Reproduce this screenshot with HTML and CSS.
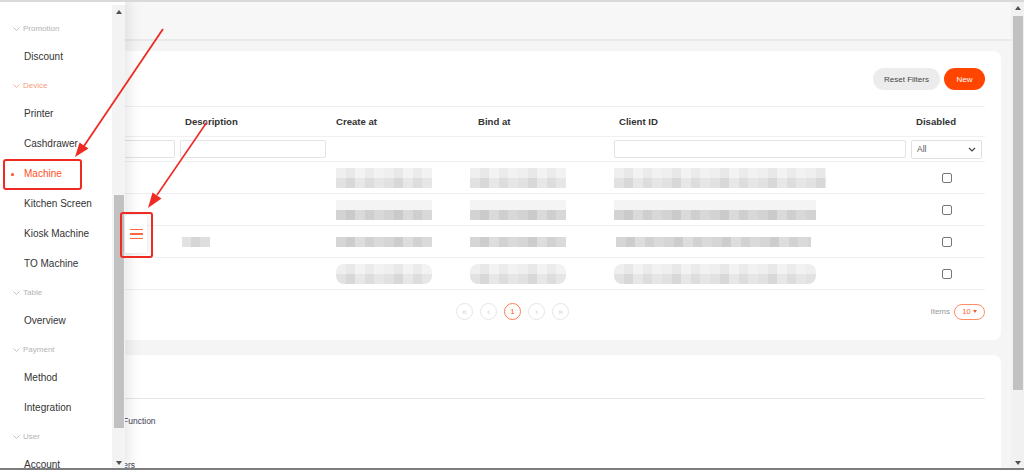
FILE: index.html
```html
<!DOCTYPE html>
<html lang="en">
<head>
  <meta charset="UTF-8">
  <meta name="viewport" content="width=device-width, initial-scale=1.0">
  <title>Machine</title>
  <link rel="stylesheet" href="styles.css">
</head>
<body>

  <!-- Main page -->
  <div class="main">
    <div class="top-band"></div>

    <div class="content">
      <!-- Machine list card -->
      <div class="card list-card">
        <div class="toolbar">
          <button class="btn btn-light">Reset Filters</button>
          <button class="btn btn-primary">New</button>
        </div>

        <div class="grid">
          <div class="row head">
            <div class="cell"></div>
            <div class="cell">Description</div>
            <div class="cell">Create at</div>
            <div class="cell">Bind at</div>
            <div class="cell">Client ID</div>
            <div class="cell">Disabled</div>
          </div>
          <div class="row filters">
            <div class="fcell"><div class="input"></div></div>
            <div class="fcell"><div class="input"></div></div>
            <div class="fcell"></div>
            <div class="fcell"></div>
            <div class="fcell"><div class="input"></div></div>
            <div class="fcell">
              <div class="select">All
                <svg width="8" height="5" viewBox="0 0 8 5"><path d="M1 1 L4 4 L7 1" fill="none" stroke="#444" stroke-width="1.2"/></svg>
              </div>
            </div>
          </div>

          <div class="row data">
            <div class="cell"></div>
            <div class="cell"></div>
            <div class="cell"><div class="blur date"></div></div>
            <div class="cell"><div class="blur date shift"></div></div>
            <div class="cell"><div class="blur cid"></div></div>
            <div class="cell center"><span class="check"></span></div>
          </div>
          <div class="row data">
            <div class="cell"></div>
            <div class="cell"></div>
            <div class="cell"><div class="blur date two"></div></div>
            <div class="cell"><div class="blur date shift two"></div></div>
            <div class="cell"><div class="blur cid two short"></div></div>
            <div class="cell center"><span class="check"></span></div>
          </div>
          <div class="row data">
            <div class="cell"></div>
            <div class="cell"><div class="blur tiny"></div></div>
            <div class="cell"><div class="blur date thin"></div></div>
            <div class="cell"><div class="blur date shift thin"></div></div>
            <div class="cell"><div class="blur cid thin shorter"></div></div>
            <div class="cell center"><span class="check"></span></div>
          </div>
          <div class="row data">
            <div class="cell"></div>
            <div class="cell"></div>
            <div class="cell"><div class="blur date round"></div></div>
            <div class="cell"><div class="blur date shift round"></div></div>
            <div class="cell"><div class="blur cid round short"></div></div>
            <div class="cell center"><span class="check"></span></div>
          </div>
        </div>

        <div class="pager-row">
          <div class="pager">
            <span class="page">&laquo;</span>
            <span class="page">&lsaquo;</span>
            <span class="page active">1</span>
            <span class="page">&rsaquo;</span>
            <span class="page">&raquo;</span>
          </div>
          <div class="page-size">
            <span class="items-label">Items</span>
            <span class="size-pill">10 <i class="caret"></i></span>
          </div>
        </div>
      </div>

      <!-- Details card -->
      <div class="card detail-card">
        <div class="detail-head"></div>
        <div class="detail-row first">Function</div>
        <div class="detail-row second">Order Handlers</div>
      </div>
    </div>
  </div>

  <!-- Page scrollbar -->
  <div class="vscroll page-scroll">
    <i class="arrow up"></i>
    <div class="thumb"></div>
    <i class="arrow down"></i>
  </div>

  <!-- Side drawer -->
  <div class="drawer">
    <div class="menu">
      <div class="menu-group"><svg width="7" height="4" viewBox="0 0 7 4"><path d="M0.5 0.5 L3.5 3.5 L6.5 0.5" fill="none" stroke="currentColor" stroke-width="0.8"/></svg>Promotion</div>
      <div class="menu-item">Discount</div>
      <div class="menu-group open"><svg width="7" height="4" viewBox="0 0 7 4"><path d="M0.5 0.5 L3.5 3.5 L6.5 0.5" fill="none" stroke="currentColor" stroke-width="0.8"/></svg>Device</div>
      <div class="menu-item">Printer</div>
      <div class="menu-item">Cashdrawer</div>
      <div class="menu-item active">Machine</div>
      <div class="menu-item">Kitchen Screen</div>
      <div class="menu-item">Kiosk Machine</div>
      <div class="menu-item">TO Machine</div>
      <div class="menu-group"><svg width="7" height="4" viewBox="0 0 7 4"><path d="M0.5 0.5 L3.5 3.5 L6.5 0.5" fill="none" stroke="currentColor" stroke-width="0.8"/></svg>Table</div>
      <div class="menu-item">Overview</div>
      <div class="menu-group"><svg width="7" height="4" viewBox="0 0 7 4"><path d="M0.5 0.5 L3.5 3.5 L6.5 0.5" fill="none" stroke="currentColor" stroke-width="0.8"/></svg>Payment</div>
      <div class="menu-item">Method</div>
      <div class="menu-item">Integration</div>
      <div class="menu-group"><svg width="7" height="4" viewBox="0 0 7 4"><path d="M0.5 0.5 L3.5 3.5 L6.5 0.5" fill="none" stroke="currentColor" stroke-width="0.8"/></svg>User</div>
      <div class="menu-item">Account</div>
    </div>
    <div class="vscroll drawer-scroll">
      <i class="arrow up"></i>
      <div class="thumb"></div>
      <i class="arrow down"></i>
    </div>
  </div>

  <!-- Drawer toggle -->
  <div class="menu-toggle">
    <span></span><span></span><span></span>
  </div>

  <!-- Annotations -->
  <div class="mark mark-machine"></div>
  <div class="mark mark-toggle"></div>
  <svg class="annotations" width="1024" height="470" viewBox="0 0 1024 470">
    <line x1="163" y1="29" x2="84" y2="146" stroke="#ee2a22" stroke-width="1.8"/>
    <polygon points="75,157 88.5,148.5 79.5,142.5" fill="#ee2a22"/>
    <line x1="207" y1="122" x2="157" y2="195" stroke="#ee2a22" stroke-width="1.6"/>
    <polygon points="148,208 161.5,198.5 152.5,192.5" fill="#ee2a22"/>
  </svg>

</body>
</html>
```

FILE: styles.css
```css
* {
  margin: 0;
  padding: 0;
  box-sizing: border-box;
}
body {
  font-family: 'Liberation Sans', Arial, sans-serif;
  color: #333;
  width: 1024px;
  height: 470px;
  overflow: hidden;
  position: relative;
  display: flex;
  border-top: 2px solid #d9d9d9;
  border-bottom: 2px solid #7d7d7d;
  background-color: #f5f5f5;
}
.main {
  flex: 1;
  background-color: #f5f5f5;
}
.top-band {
  height: 39px;
  background-color: #f7f7f7;
  border-bottom: 2px solid #e9e9e9;
}
.content {
  padding: 10px 10px 0;
}
.card {
  background-color: #fff;
  border-radius: 8px;
  padding: 17px 16px 0;
}
.list-card {
  height: 289px;
}
.toolbar {
  display: flex;
  justify-content: flex-end;
  gap: 4px;
  margin-bottom: 16px;
}
.btn {
  height: 22px;
  border: none;
  border-radius: 11px;
  font-family: inherit;
  font-size: 8px;
}
.btn-light {
  width: 67px;
  background-color: #ececec;
  color: #444;
}
.btn-primary {
  width: 41px;
  background-color: #ff4500;
  color: #fff;
}

/* Table */
.grid {
  border-top: 1px solid #f0f0f0;
}
.row {
  display: grid;
  grid-template-columns: 154px 151px 142px 141px 297px 74px;
  align-items: center;
  border-bottom: 1px solid #f0f0f0;
}
.row.head {
  height: 30px;
  font-size: 9.6px;
  font-weight: bold;
  color: #333;
}
.row.filters {
  height: 25px;
}
.row.data {
  height: 32px;
}
.cell {
  padding-left: 5px;
}
.cell.center {
  padding-left: 0;
  text-align: center;
}
.fcell {
  padding-right: 5px;
}
.input {
  height: 18px;
  border: 1px solid #e3e3e3;
  border-radius: 2px;
  background-color: #fff;
}
.select {
  height: 19px;
  width: 71px;
  border: 1px solid #e0e0e0;
  border-radius: 2px;
  display: flex;
  align-items: center;
  justify-content: space-between;
  padding: 0 5px 0 5px;
  font-size: 8.5px;
  color: #555;
}
.check {
  display: inline-block;
  width: 10px;
  height: 10px;
  border: 1px solid #777;
  border-radius: 2px;
  vertical-align: middle;
  margin-left: -2px;
}

/* Blurred (pixelated) values */
.blur {
  height: 20px;
  background-image:
    linear-gradient(to bottom, rgba(255, 255, 255, 0.35) 50%, rgba(0, 0, 0, 0.02) 50%),
    repeating-linear-gradient(90deg, #e6e6e6 0 10px, #dcdcdc 10px 19px, #ececec 19px 29px, #e1e1e1 29px 38px, #ebebeb 38px 48px);
  filter: blur(0.4px);
}
.blur.date {
  width: 96px;
}
.blur.shift {
  margin-left: -8px;
}
.blur.cid {
  width: 212px;
  margin-left: -5px;
}
.blur.cid.short {
  width: 202px;
}
.blur.cid.shorter {
  width: 195px;
  margin-left: -3px;
}
.blur.two {
  background-image:
    linear-gradient(to bottom, #f4f4f4 50%, transparent 50%),
    repeating-linear-gradient(90deg, #d3d3d3 0 10px, #cacaca 10px 19px, #dadada 19px 29px, #cfcfcf 29px 38px, #d8d8d8 38px 48px);
}
.blur.thin {
  height: 10px;
  background-image: repeating-linear-gradient(90deg, #d6d6d6 0 10px, #cdcdcd 10px 19px, #dddddd 19px 29px, #d2d2d2 29px 38px, #dadada 38px 48px);
}
.blur.tiny {
  width: 28px;
  height: 10px;
  margin-left: -3px;
  background-image: repeating-linear-gradient(90deg, #e2e2e2 0 9px, #d6d6d6 9px 18px, #dedede 18px 28px);
}
.blur.round {
  border-radius: 8px;
}

/* Pagination */
.pager-row {
  display: flex;
  align-items: center;
  padding-top: 13px;
}
.pager {
  display: flex;
  gap: 7px;
  margin-left: 430px;
}
.page {
  width: 17px;
  height: 17px;
  border-radius: 50%;
  border: 1px solid #e6e6e6;
  color: #cfcfcf;
  font-size: 9px;
  display: flex;
  align-items: center;
  justify-content: center;
}
.page.active {
  border-color: #ff7a50;
  color: #ff5a26;
  font-size: 8px;
}
.page-size {
  margin-left: auto;
  display: flex;
  align-items: center;
  gap: 4px;
}
.items-label {
  font-size: 8px;
  color: #999;
}
.size-pill {
  width: 31px;
  height: 16px;
  border: 1px solid #ff8c66;
  border-radius: 8px;
  color: #ff5a26;
  font-size: 7.5px;
  display: flex;
  align-items: center;
  justify-content: center;
  gap: 2px;
}
.caret {
  width: 0;
  height: 0;
  border-left: 2px solid transparent;
  border-right: 2px solid transparent;
  border-top: 3px solid #ff5a26;
}

/* Detail card */
.detail-card {
  margin-top: 15px;
  height: 140px;
  padding-top: 0;
}
.detail-head {
  height: 44px;
  border-bottom: 1px solid #e6e6e6;
}
.detail-row {
  font-size: 8.5px;
  color: #3d3d55;
}
.detail-row.first {
  padding: 17px 0 0 97px;
}
.detail-row.second {
  padding: 34px 0 0 51px;
}

/* Scrollbars */
.vscroll {
  width: 13px;
  background-color: #f1f1f1;
  display: flex;
  flex-direction: column;
  align-items: center;
}
.vscroll .thumb {
  width: 10px;
  background-color: #c1c1c1;
}
.arrow {
  width: 0;
  height: 0;
  border-left: 3px solid transparent;
  border-right: 3px solid transparent;
}
.arrow.up {
  border-bottom: 4px solid #505050;
}
.arrow.down {
  border-top: 4px solid #505050;
  margin-top: auto;
  margin-bottom: 3px;
}
.page-scroll {
  padding-top: 4px;
}
.page-scroll .thumb {
  margin-top: 6px;
  height: 374px;
}
.drawer-scroll {
  margin-top: 5px;
  padding-top: 5px;
  background-color: #f3f3f3;
}
.drawer-scroll .thumb {
  margin-top: 181px;
  height: 233px;
}

/* Drawer */
.drawer {
  position: absolute;
  top: -2px;
  left: 0;
  bottom: 0;
  display: flex;
  background-color: #fff;
  box-shadow: 5px 0 12px rgba(0, 0, 0, 0.09);
  z-index: 2;
}
.menu {
  width: 112px;
  padding-top: 15px;
}
.menu-group {
  height: 27px;
  padding-left: 13px;
  display: flex;
  align-items: center;
  gap: 3px;
  font-size: 8px;
  color: #b3b3b3;
}
.menu-group.open {
  color: #f89b7b;
}
.menu-item {
  height: 30px;
  line-height: 30px;
  padding-left: 24px;
  font-size: 10px;
  color: #333;
  position: relative;
}
.menu-item.active {
  color: #ff4f1f;
}
.menu-item.active::before {
  content: "";
  position: absolute;
  left: 11px;
  top: 14px;
  width: 3px;
  height: 3px;
  border-radius: 50%;
  background-color: #ff4f1f;
}
.menu-toggle {
  position: absolute;
  left: 125px;
  top: 213px;
  width: 22px;
  height: 38px;
  background-color: #fff;
  border-radius: 2px;
  box-shadow: 0 0 4px rgba(0, 0, 0, 0.14);
  display: flex;
  flex-direction: column;
  align-items: center;
  justify-content: center;
  gap: 3px;
  z-index: 3;
}
.menu-toggle span {
  width: 13px;
  height: 1.5px;
  background-color: #ff6a3d;
}

/* Red annotations */
.mark {
  position: absolute;
  border: 2px solid #ee2a22;
  border-radius: 3px;
  z-index: 4;
}
.mark-machine {
  left: 3px;
  top: 157px;
  width: 79px;
  height: 31px;
}
.mark-toggle {
  left: 120px;
  top: 210px;
  width: 33px;
  height: 46px;
}
.annotations {
  position: absolute;
  top: -2px;
  left: 0;
  pointer-events: none;
  z-index: 5;
}
```
